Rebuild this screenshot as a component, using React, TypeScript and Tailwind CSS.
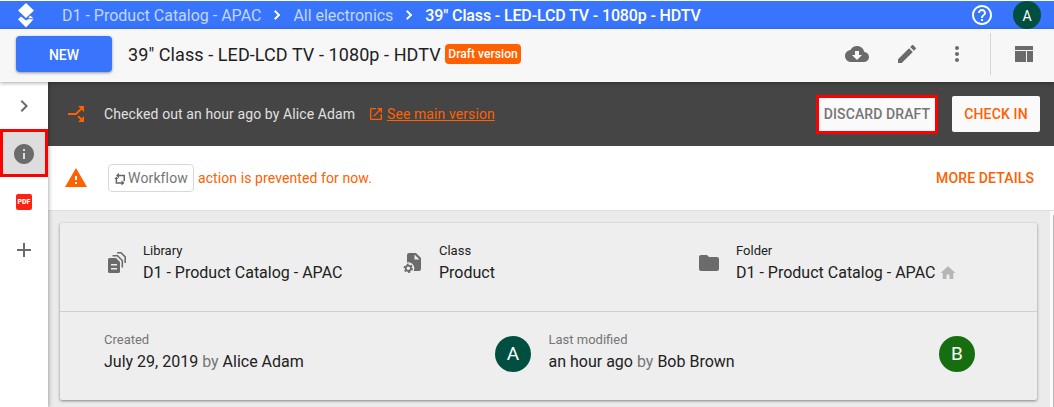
import type { ReactNode } from "react";
import clsx from "clsx";

const icons = {
  chevron: "M10 6L8.59 7.41 13.17 12l-4.58 4.59L10 18l6-6z",
  help: "M11 18h2v-2h-2v2zm1-16C6.48 2 2 6.48 2 12s4.48 10 10 10 10-4.48 10-10S17.52 2 12 2zm0 18c-4.41 0-8-3.59-8-8s3.59-8 8-8 8 3.59 8 8-3.59 8-8 8zm0-14c-2.21 0-4 1.79-4 4h2c0-1.1.9-2 2-2s2 .9 2 2c0 2-3 1.75-3 5h2c0-2.25 3-2.5 3-5 0-2.21-1.79-4-4-4z",
  cloud: "M19.35 10.04C18.67 6.59 15.64 4 12 4 9.11 4 6.6 5.64 5.35 8.04 2.34 8.36 0 10.91 0 14c0 3.31 2.69 6 6 6h13c2.76 0 5-2.24 5-5 0-2.64-2.05-4.78-4.65-4.96zM17 13l-5 5-5-5h3V9h4v4h3z",
  edit: "M3 17.25V21h3.75L17.81 9.94l-3.75-3.75L3 17.25zM20.71 7.04c.39-.39.39-1.02 0-1.41l-2.34-2.34c-.39-.39-1.02-.39-1.41 0l-1.83 1.83 3.75 3.75 1.83-1.83z",
  more: "M12 8c1.1 0 2-.9 2-2s-.9-2-2-2-2 .9-2 2 .9 2 2 2zm0 2c-1.1 0-2 .9-2 2s.9 2 2 2 2-.9 2-2-.9-2-2-2zm0 6c-1.1 0-2 .9-2 2s.9 2 2 2 2-.9 2-2-.9-2-2-2z",
  layout: "M3 4h18v4H3zM3 9h11v11H3zM15 9h6v11h-6z",
  info: "M12 2C6.48 2 2 6.48 2 12s4.48 10 10 10 10-4.48 10-10S17.52 2 12 2zm1 15h-2v-6h2v6zm0-8h-2V7h2v2z",
  plus: "M19 13h-6v6h-2v-6H5v-2h6V5h2v6h6v2z",
  split: "M14 4l2.29 2.29-2.88 2.88 1.42 1.42 2.88-2.88L20 10V4zm-4 0H4v6l2.29-2.29 4.71 4.7V20h2v-8.41l-5.29-5.3z",
  open: "M19 19H5V5h7V3H5c-1.11 0-2 .9-2 2v14c0 1.1.89 2 2 2h14c1.1 0 2-.9 2-2v-7h-2v7zM14 3v2h3.59l-9.83 9.83 1.41 1.41L19 6.41V10h2V3h-7z",
  warning: "M1 21h22L12 2 1 21zm12-3h-2v-2h2v2zm0-4h-2v-4h2v4z",
  folder: "M10 4H4c-1.1 0-1.99.9-1.99 2L2 18c0 1.1.9 2 2 2h16c1.1 0 2-.9 2-2V8c0-1.1-.9-2-2-2h-8l-2-2z",
  home: "M10 20v-6h4v6h5v-8h3L12 3 2 12h3v8z",
};

function Icon({ name, className }: { name: keyof typeof icons; className?: string }) {
  return (
    <svg viewBox="0 0 24 24" fill="currentColor" className={clsx("shrink-0", className)}>
      <path d={icons[name]} />
    </svg>
  );
}

function Logo() {
  return (
    <svg viewBox="0 0 18 26" className="w-[18px] h-[26px]" fill="#fff">
      <path d="M9 1L17 8.6 9 16 1 8.6Z" />
      <path d="M1 17.2L4 14.5 9 18.6 11 17.2H16.6L9 25.5Z" />
      <path d="M13.2 13.4L16.4 16.3H11.2Z" />
    </svg>
  );
}

function LibraryIcon() {
  return (
    <svg viewBox="0 0 20 22" className="w-5 h-[22px] shrink-0">
      <path
        d="M2.5 7H9l4 4v9.500a1.500 1.500 0 0 1-1.500 1.500h-9A1.500 1.500 0 0 1 1 20.500v-12A1.500 1.500 0 0 1 2.500 7zM4 13v1.500h6V13zM4 17v1.500h6V17z"
        fill="#6b6b6b"
        fillRule="evenodd"
      />
      <path d="M5.500 4.700h5l4.800 4.800v7M10 1.700h4l4.200 4.200v6" fill="none" stroke="#6b6b6b" strokeWidth="1.6" />
    </svg>
  );
}

function ClassIcon() {
  return (
    <svg viewBox="0 0 20 22" className="w-5 h-[22px] shrink-0">
      <path d="M6 2h7l5 5v11a2 2 0 0 1-2 2H4V4a2 2 0 0 1 2-2zM11.5 3.5v5h5z" fill="#6b6b6b" fillRule="evenodd" />
      <circle cx="5.3" cy="17.3" r="6" fill="#eee" />
      <circle cx="5.3" cy="17.3" r="2.7" fill="none" stroke="#6b6b6b" strokeWidth="1.8" />
      <circle cx="5.3" cy="17.3" r="4" fill="none" stroke="#6b6b6b" strokeWidth="1.4" strokeDasharray="2 2.19" />
    </svg>
  );
}

function WorkflowIcon() {
  return (
    <svg viewBox="0 0 12 14" className="w-3 h-3.5 mt-0.5 shrink-0 text-[#666]">
      <path d="M4 3.5h6.2v5.8M8 10.9H2.4V5.4" fill="none" stroke="currentColor" strokeWidth="1.5" />
      <path d="M5 .8v5.400L2 3.500zM7.500 8.200v5.400l3-2.700zM.4 7l2-2.200 2 2.200z" fill="currentColor" />
    </svg>
  );
}

function Avatar({ letter, className }: { letter: string; className: string }) {
  return (
    <div className={clsx("flex items-center justify-center rounded-full text-white shrink-0", className)}>
      {letter}
    </div>
  );
}

function Field({ label, muted, children }: { label: string; muted?: boolean; children: ReactNode }) {
  return (
    <div className="whitespace-nowrap">
      <div className={clsx("text-[13px] leading-5", muted ? "text-[#757575]" : "text-[#212121]")}>{label}</div>
      <div className="flex items-center text-base leading-6 text-[#212121]">{children}</div>
    </div>
  );
}

export default function App() {
  return (
    <div className="w-[1054px] h-[407px] overflow-hidden flex flex-col bg-white font-['Roboto',sans-serif]">
      <header className="mt-px h-7 shrink-0 bg-[#3875fc] flex items-center pl-[17px] pr-[13px] text-white text-base whitespace-nowrap">
        <Logo />
        <nav className="ml-[27px] flex items-center">
          <span className="pt-0.5 text-[#c3d6fe]">D1 - Product Catalog - APAC</span>
          <Icon name="chevron" className="size-[18px] ml-[7px] mr-[7px] stroke-white" />
          <span className="pt-0.5 text-[#c3d6fe] tracking-[-0.03px]">All electronics</span>
          <Icon name="chevron" className="size-[18px] ml-[7px] mr-[7px] stroke-white" />
          <span className="pt-0.5 font-medium tracking-[-0.14px]">39" Class - LED-LCD TV - 1080p - HDTV</span>
        </nav>
        <Icon name="help" className="size-6 ml-auto" />
        <Avatar letter="A" className="ml-[19px] size-7 pt-px bg-[#004f40] text-sm" />
      </header>

      <div className="relative z-20 h-[53px] pb-[3px] shrink-0 bg-[#f7f7f7] shadow-[0_1px_4px_rgba(0,0,0,0.35)] flex items-center pl-4 pr-[18px] text-[#6b6b6b]">
        <button className="w-24 h-9 pt-0.5 rounded bg-[#3875fc] text-white text-sm font-medium shadow-[0_1px_3px_rgba(0,0,0,0.4)]">
          NEW
        </button>
        <h1 className="ml-4 w-[313px] pt-0.5 text-lg text-[#212121] tracking-[0.08px] whitespace-nowrap">
          39" Class - LED-LCD TV - 1080p - HDTV
        </h1>
        <span className="ml-1 w-[76px] h-5 rounded bg-[#ff6000] text-white text-xs font-medium tracking-[0.05px] flex items-center justify-center whitespace-nowrap">
          Draft version
        </span>
        <Icon name="cloud" className="size-6 ml-auto" />
        <Icon name="edit" className="size-6 ml-[26px]" />
        <Icon name="more" className="size-6 ml-[26px]" />
        <div className="w-px h-[42px] ml-[21px] bg-[#d5d5d5]" />
        <Icon name="layout" className="size-6 ml-[21px]" />
      </div>

      <div className="flex flex-1 min-h-0">
        <aside className="relative z-10 w-12 shrink-0 bg-white shadow-[1px_0_4px_rgba(0,0,0,0.3)] flex flex-col items-center text-[#6b6b6b]">
          <div className="h-[47px] flex items-center">
            <Icon name="chevron" className="size-6" />
          </div>
          <div className="w-12 h-12 pt-0.5 border-3 border-[#f00] bg-[#ddd] flex items-center justify-center">
            <Icon name="info" className="size-6" />
          </div>
          <div className="h-[49px] flex items-center">
            <div className="size-4 pt-0.5 rounded-[2px] bg-[#ff2210] text-white text-[7px] leading-none font-black flex items-center justify-center">
              PDF
            </div>
          </div>
          <div className="h-12 flex items-center">
            <Icon name="plus" className="size-6" />
          </div>
        </aside>

        <main className="flex-1 min-w-0 flex flex-col">
          <section className="h-16 shrink-0 bg-[#454545] flex items-center pl-4 pr-3.5 text-sm whitespace-nowrap">
            <Icon name="split" className="size-6 rotate-90 text-[#ff6000]" />
            <span className="ml-4 w-[251px] text-[#e0e0e0] tracking-[0.1px]">Checked out an hour ago by Alice Adam</span>
            <a className="ml-[13px] flex items-center text-[#ff6000] tracking-[0.09px]">
              <Icon name="open" className="size-4 mr-[3px]" />
              <span className="underline">See main version</span>
            </a>
            <button className="ml-auto w-[122px] h-[39px] border-3 border-[#f00] bg-[#fafafa] text-[#757575] font-medium tracking-[0.1px]">
              DISCARD DRAFT
            </button>
            <button className="ml-3.5 w-[88px] h-9 rounded-[2px] bg-[#fafafa] text-[#ff6000] font-medium tracking-[0.14px]">
              CHECK IN
            </button>
          </section>

          <section className="h-[65px] shrink-0 border-b border-[#dedede] flex items-center pl-4 pr-5 text-sm text-[#ff6000] whitespace-nowrap">
            <Icon name="warning" className="size-6" />
            <span className="ml-5 w-[86px] h-7 border border-[#d8d8d8] rounded flex items-center justify-center text-[#757575] tracking-[0.13px]">
              <WorkflowIcon />
              <span className="ml-0.5 pb-px">Workflow</span>
            </span>
            <span className="ml-1 tracking-[0.09px]">action is prevented for now.</span>
            <a className="ml-auto font-medium tracking-[0.12px]">MORE DETAILS</a>
          </section>

          <div className="flex flex-1 min-h-0 bg-[#ebebeb]">
            <div className="ml-3 mt-3 w-[977px] h-[177px] rounded-[2px] bg-[#eee] shadow-[0_1px_3px_rgba(0,0,0,0.45)]">
              <div className="h-[89px] border-b border-[#d0d0d0] flex pt-[18px]">
                <div className="w-[295px] flex pl-[47px] gap-4">
                  <div className="mt-[10px]"><LibraryIcon /></div>
                  <Field label="Library">D1 - Product Catalog - APAC</Field>
                </div>
                <div className="w-[295px] flex pl-[48px] gap-4">
                  <div className="mt-[10px]"><ClassIcon /></div>
                  <Field label="Class">Product</Field>
                </div>
                <div className="flex pl-[47px] gap-[15px]">
                  <Icon name="folder" className="size-6 mt-[10px] text-[#6b6b6b]" />
                  <Field label="Folder">
                    D1 - Product Catalog - APAC
                    <Icon name="home" className="size-[18px] ml-1 text-[#b5b5b5]" />
                  </Field>
                </div>
              </div>
              <div className="flex pt-[18px]">
                <div className="w-[444px] flex pl-11">
                  <Field label="Created" muted>
                    <span>July 29, 2019 <span className="text-[#757575]">by</span> Alice Adam</span>
                  </Field>
                  <Avatar letter="A" className="ml-auto mr-[-27px] mt-[6px] size-9 bg-[#004f40] text-[19px]" />
                </div>
                <div className="w-[444px] flex pl-[44.5px]">
                  <Field label="Last modified" muted>
                    <span>an hour ago <span className="text-[#757575]">by</span> Bob Brown</span>
                  </Field>
                  <Avatar letter="B" className="ml-auto mr-[-27px] mt-[6px] size-9 bg-[#176e10] text-[19px]" />
                </div>
              </div>
            </div>
            <div className="ml-auto w-1 bg-[#fafafa] flex justify-end pt-1">
              <div className="w-px bg-[#bbb]" />
            </div>
          </div>
        </main>
      </div>
    </div>
  );
}
